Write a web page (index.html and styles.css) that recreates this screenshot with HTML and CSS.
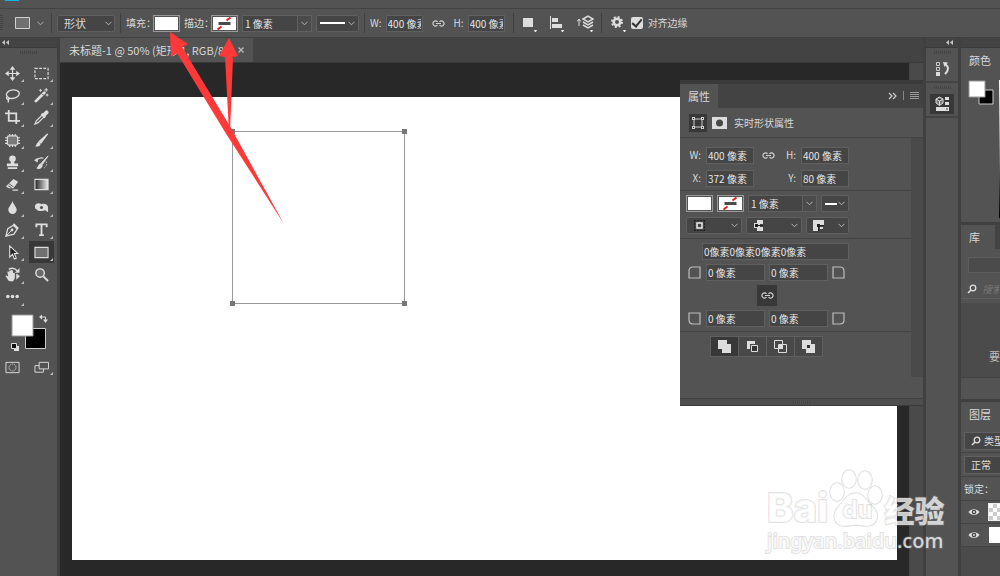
FILE: index.html
```html
<!DOCTYPE html>
<html lang="zh-CN">
<head>
  <meta charset="UTF-8">
  <title>未标题-1</title>
  <link rel="stylesheet" href="styles.css">
</head>
<body>
  <svg class="defs" aria-hidden="true">
    <symbol id="chevron" viewBox="0 0 7 5"><path d="M.5 .8 3.5 3.8 6.5 .8" fill="none" stroke="#b5b5b5"/></symbol>
    <symbol id="link" viewBox="0 0 13 7"><path d="M5.5 5.2A2.6 2.6 0 1 1 5.5 1.8M7.5 1.8A2.6 2.6 0 1 1 7.5 5.2M4 3.5h5" fill="none" stroke="#cfcfcf" stroke-width="1.2"/></symbol>
    <symbol id="nostroke" viewBox="0 0 22 13"><path d="M0 0h22v13H0z" fill="#fff"/><path d="M4 12.5 8 9.500M13 3.500 17 .5" stroke="#e02020" stroke-width="2"/><path d="M5 5h12v3H5z" fill="#4a4a4a"/></symbol>
    <symbol id="search" viewBox="0 0 10 10"><circle cx="6" cy="4" r="2.800" fill="none" stroke="#ddd" stroke-width="1.300"/><path d="M4 6 1 9" stroke="#ddd" stroke-width="1.600"/></symbol>
    <symbol id="eye" viewBox="0 0 12 8"><path d="M.5 4C3 .2 9 .2 11.500 4 9 7.800 3 7.800 .5 4z" fill="#e0e0e0"/><circle cx="6" cy="4" r="2.300" fill="#4a4a4a"/><circle cx="6" cy="4" r="1" fill="#e0e0e0"/></symbol>
    <symbol id="corner" viewBox="0 0 13 13"><path d="M5 1h7v11H1V5q0-4 4-4z" fill="none" stroke="#bdbdbd" stroke-width="1.200"/></symbol>
  </svg>

  <div class="menubar"><span class="logo"></span></div>

  <div class="options">
    <span class="grip-v"></span>
    <button class="preset" aria-label="矩形工具">
      <svg width="15" height="12"><path d="M.5 .5h14v11H.5z" fill="#707070" stroke="#d0d0d0"/></svg>
      <svg width="7" height="5"><use href="#chevron"/></svg>
    </button>
    <span class="sep"></span>
    <span class="select mode">
      <select aria-label="模式"><option>形状</option></select>
      <svg width="7" height="5"><use href="#chevron"/></svg>
    </span>
    <span class="sep"></span>
    <label class="swatch-label" for="fill">填充：</label>
    <button id="fill" class="swatch"></button>
    <label class="swatch-label" for="stroke">描边：</label>
    <button id="stroke" class="swatch"><svg width="23" height="13"><use href="#nostroke"/></svg></button>
    <span class="combo">
      <input type="text" value="1 像素" aria-label="描边宽度">
      <button aria-label="选择宽度"><svg width="7" height="5"><use href="#chevron"/></svg></button>
    </span>
    <button class="drop line" aria-label="线型">
      <svg width="25" height="2"><path d="M0 0h25v2H0z" fill="#fff"/></svg>
      <svg width="7" height="5"><use href="#chevron"/></svg>
    </button>
    <span class="sep"></span>
    <label for="w">W:</label>
    <input id="w" class="size" type="text" value="400 像素">
    <button class="link" aria-label="链接"><svg width="13" height="7"><use href="#link"/></svg></button>
    <label for="h">H:</label>
    <input id="h" class="size" type="text" value="400 像素">
    <div class="actions">
      <span class="sep"></span>
      <button class="action" aria-label="路径操作"><svg width="17" height="18"><path d="M0 4h10v9H0z" fill="#ddd"/><path d="M11 16h3l-1 2h-1z" fill="#eee"/></svg></button>
      <button class="action" aria-label="对齐"><svg width="17" height="18"><path d="M.5 2v13" stroke="#ddd"/><path d="M2 4h6v4H2zM2 10h10v4H2z" fill="#ddd"/><path d="M11 16h3l-1 2h-1z" fill="#eee"/></svg></button>
      <button class="action" aria-label="排列"><svg width="18" height="18"><path d="M2 12V6M0 7.500 2 5l2 2.500" fill="none" stroke="#ddd"/><path d="M6 5l5-3 5 3-5 3zM6 8l5 3 5-3M6 11l5 3 5-3" fill="none" stroke="#ddd" stroke-width="1.500"/><path d="M13 16h3l-1 2h-1z" fill="#eee"/></svg></button>
      <span class="sep"></span>
      <button class="action" aria-label="设置"><svg width="17" height="18"><circle cx="6" cy="8" r="3.300" fill="none" stroke="#ddd" stroke-width="2.600"/><circle cx="6" cy="8" r="5" fill="none" stroke="#ddd" stroke-width="2" stroke-dasharray="2 1.930"/><path d="M12 16h3l-1 2h-1z" fill="#eee"/></svg></button>
      <span class="check"><input id="snap" type="checkbox" checked><label for="snap">对齐边缘</label></span>
    </div>
  </div>

  <div class="workspace">
    <div class="toolbox">
      <div class="dock-head"><svg width="7" height="5"><path d="M3 0v5L0 2.500zM7 0v5L4 2.500z" fill="#c8c8c8"/></svg></div>
      <span class="grip"></span>
      <div class="tools">
        <button aria-label="移动"><svg viewBox="0 0 16 16"><path d="M8 2v12M2 8h12" stroke="#ddd" stroke-width="1.300"/><path d="M8 0l3 4H5zM8 16l3-4H5zM0 8l4-3v6zM16 8l-4-3v6z" fill="#ddd"/></svg></button>
        <button aria-label="选框"><svg viewBox="0 0 16 16"><path d="M1 2.500h14v11H1z" fill="none" stroke="#ddd" stroke-width="1.200" stroke-dasharray="3 1.500"/></svg></button>
        <button aria-label="套索"><svg viewBox="0 0 16 16"><path d="M3.500 10C-1 7 3 2 9 2s8 4 4.500 7S5 11.500 3.500 10s-2.500 .5-1 2 2.500 0 1-1.500m0 2v3" fill="none" stroke="#ddd" stroke-width="1.400"/></svg></button>
        <button aria-label="魔棒"><svg viewBox="0 0 16 16"><path d="M2 14 11 5" stroke="#ddd" stroke-width="3" stroke-linecap="round"/><path d="M8.500 6l2 2" stroke="#535353"/><path d="M7 1v3M5.500 2.500h3M13 0v4M11 2h4M14 6v3M12.500 7.500h3" stroke="#ddd"/></svg></button>
        <button aria-label="裁剪"><svg viewBox="0 0 16 16"><path d="M0 3.500h12V12M4 0v11.500h12M12 11.500V15" fill="none" stroke="#ddd" stroke-width="1.900"/></svg></button>
        <button aria-label="吸管"><svg viewBox="0 0 16 16"><path d="M9.500 4.500 2.500 11.500 1 15l3.500-1.500 7-7z" fill="none" stroke="#ddd" stroke-width="1.300"/><path d="M8 4l4 4" stroke="#ddd" stroke-width="2"/><path d="M10.500 5.500 13.500 2.500" stroke="#ddd" stroke-width="4" stroke-linecap="round"/></svg></button>
        <button aria-label="修补"><svg viewBox="0 0 16 16"><path d="M5 1v14M8 1v14M11 1v14M0 5h16M0 8h16M0 11h16" stroke="#ddd" stroke-width="1.200"/><rect x="2.500" y="3" width="11" height="10" rx="2" fill="#7a7a7a" stroke="#ddd" stroke-width="1.300"/></svg></button>
        <button aria-label="画笔"><svg viewBox="0 0 16 16"><path d="M14.500 1 7.500 10.500 5.500 9z" fill="#ddd" stroke="#ddd" stroke-width="1.300"/><path d="M5 9.500c2 .5 2.500 2 1.500 3.500C5 15 2 14.500 1 14c2-.5 1.500-4 4-4.500z" fill="#ddd"/></svg></button>
        <button aria-label="图章"><svg viewBox="0 0 16 16"><circle cx="8" cy="4" r="3.500" fill="#ddd"/><path d="M6.500 5h3l.5 4h4v3H2V9h4zM3 13h10v2H3z" fill="#ddd"/></svg></button>
        <button aria-label="历史画笔"><svg viewBox="0 0 16 16"><path d="M15 1 9 10 7.500 9zM7 9.500c2 .5 2 2 1 3.500-1.500 2-4 1.500-5 1 2-.5 1.500-4 4-4.500z" fill="#ddd" stroke="#ddd"/><path d="M4 3 0 5.500 4 8z" fill="#ddd"/><path d="M3 5.500Q6 2 10 3.500" fill="none" stroke="#ddd" stroke-width="1.200"/><path d="M13 7q2 4-3 7.500" fill="none" stroke="#ddd" stroke-dasharray="1.500 1.500"/></svg></button>
        <button aria-label="橡皮"><svg viewBox="0 0 16 16"><path d="M9 2l5 3-5 7H4l-3-2z" fill="#ddd"/><path d="M4 7l5 3.500M3.500 9.500 7 11.500" fill="none" stroke="#535353"/><path d="M8 14h6" stroke="#ddd" stroke-width="1.300"/></svg></button>
        <button aria-label="渐变"><svg viewBox="0 0 16 16"><defs><linearGradient id="g"><stop stop-color="#222"/><stop offset="1" stop-color="#eee"/></linearGradient></defs><path d="M1 2.500h14v11H1z" fill="url(#g)" stroke="#ddd" stroke-width="1.200"/></svg></button>
        <button aria-label="模糊"><svg viewBox="0 0 16 16"><path d="M8 1C7 5 3.500 7 3.500 10.500a4.500 4.500 0 0 0 9 0C12.500 7 9 5 8 1z" fill="#ddd"/></svg></button>
        <button aria-label="海绵"><svg viewBox="0 0 16 16"><path d="M1 7c0-4 5-4 7-2.500 3-1 7 0 7 3.500v5l-3-2c-3 1-8 1-9-1C1 10 1 8 1 7z" fill="#ddd"/><circle cx="8" cy="8" r="1.700" fill="#535353"/></svg></button>
        <button aria-label="钢笔"><svg viewBox="0 0 16 16"><path d="M1 15 3 7l6-3.500 4 4L9.500 13z" fill="none" stroke="#ddd" stroke-width="1.400"/><path d="M1 15 7 9" stroke="#ddd"/><circle cx="7.500" cy="8.500" r="1.500" fill="#ddd"/><path d="M9 2l5 5" stroke="#ddd" stroke-width="2"/></svg></button>
        <button aria-label="文字"><svg viewBox="0 0 16 16"><path d="M2.500 5.500V2.500h11v3M8 2.500v11M5.500 14h5" fill="none" stroke="#ddd" stroke-width="2"/></svg></button>
        <button aria-label="路径选择"><svg viewBox="0 0 16 16"><path d="M5 1v12l3-3 2 5 2-1-2-5h3.500z" fill="#222" stroke="#ddd" stroke-width="1.200"/></svg></button>
        <button class="active" aria-label="矩形"><svg viewBox="0 0 16 16"><path d="M1 2.500h14v11H1z" fill="#707070" stroke="#ddd" stroke-width="1.200"/></svg></button>
        <button aria-label="抓手"><svg viewBox="0 0 16 16"><path d="M4 15 .5 9.500q1-1.500 3 1L2.500 5q1.500-1 2 1V4q1.500-1.500 2 .5V3.500q1.500-1 2 1v2q2-1 2 1v4q-.5 3-2.500 4z" fill="#ddd"/><path d="M4 2.500q5-3 9 1.500" fill="none" stroke="#ddd" stroke-width="1.400"/><path d="M15.500 1v5h-5zM12 7l4 2.500-4 4z" fill="#ddd"/></svg></button>
        <button aria-label="缩放"><svg viewBox="0 0 16 16"><circle cx="6.500" cy="6.500" r="4.500" fill="#6a6a6a" stroke="#ddd" stroke-width="1.500"/><path d="M10 10l5 5" stroke="#ddd" stroke-width="2.200"/></svg></button>
        <button aria-label="更多"><svg viewBox="0 0 16 16"><circle cx="3" cy="8" r="1.900" fill="#ddd"/><circle cx="8" cy="8" r="1.900" fill="#ddd"/><circle cx="13" cy="8" r="1.900" fill="#ddd"/></svg></button>
      </div>
      <svg class="colors" width="40" height="40">
        <path d="M14.500 14.500h20v20h-20z" fill="#000" stroke="#ccc"/>
        <path d="M1 1h21v21H1z" fill="#fff" stroke="#999"/>
        <path d="M31 .5v5L28 3zM32 5.500h5L34.500 9z" fill="#ddd"/><path d="M30 3h4.500v3" fill="none" stroke="#ddd"/>
        <path d="M3 32h5v5H3z" fill="#ddd"/><path d="M.5 29.500h5v5h-5z" fill="#111" stroke="#ddd"/>
      </svg>
      <div class="modes">
        <button aria-label="快速蒙版"><svg viewBox="0 0 16 16"><path d="M1 2.500h14v11H1z" fill="none" stroke="#ddd"/><circle cx="8" cy="8" r="3.700" fill="none" stroke="#ddd" stroke-dasharray="1.300 1"/></svg></button>
        <button class="more" aria-label="屏幕模式"><svg viewBox="0 0 16 16"><path d="M1 6h9v7H1z" fill="none" stroke="#ddd"/><path d="M5.500 2.500h10v7h-10z" fill="#535353" stroke="#ddd"/></svg></button>
      </div>
    </div>

    <div class="main">
      <div class="tabs">
        <div class="tab">未标题-1 @ 50% (矩形 1, RGB/8)<button aria-label="关闭"><svg width="6" height="6"><path d="M.5 .5l5 5M5.500 .5l-5 5" stroke="#bbb" stroke-width="1.300"/></svg></button></div>
      </div>
      <div class="view">
        <div class="canvas">
          <div class="artboard">
            <svg class="shape" width="178" height="178">
              <path d="M3.500 3.500h172v172H3.500z" fill="none" stroke="#999"/>
              <path d="M1 1h5v5H1zM173 1h5v5h-5zM1 173h5v5H1zM173 173h5v5h-5z" fill="#777"/>
            </svg>
          </div>
        </div>
        <div class="scroll"></div>
      </div>

      <div class="properties">
        <div class="panel-tabs">
          <span class="panel-tab">属性</span>
          <svg width="32" height="10"><path d="M1 2l3 3-3 3M5 2l3 3-3 3" fill="none" stroke="#ccc" stroke-width="1.200"/><path d="M15.500 0v9" stroke="#888"/><path d="M22 1.500h9M22 3.500h9M22 5.500h9M22 7.500h9" stroke="#999"/></svg>
        </div>
        <div class="panel-title">
          <span class="badge"><svg width="12" height="12"><path d="M2 2h8v8H2z" fill="none" stroke="#ccc"/><path d="M0 0h3v3H0zM9 0h3v3H9zM0 9h3v3H0zM9 9h3v3H9z" fill="#ccc"/><path d="M1 1h1v1H1zM10 1h1v1h-1zM1 10h1v1H1zM10 10h1v1h-1z" fill="#383838"/></svg></span>
          <svg width="15" height="12"><path d="M0 0h15v12H0z" fill="#ddd"/><circle cx="7.500" cy="6" r="3.500" fill="#484848"/></svg>
          <span>实时形状属性</span>
        </div>
        <div class="panel-body">
          <div class="fields">
            <div class="geometry">
              <label for="pw">W:</label><input id="pw" type="text" value="400 像素">
              <button class="plain" aria-label="链接"><svg width="13" height="7"><use href="#link"/></svg></button>
              <label for="ph">H:</label><input id="ph" type="text" value="400 像素">
              <label for="px">X:</label><input id="px" type="text" value="372 像素">
              <span></span>
              <label for="py">Y:</label><input id="py" type="text" value="80 像素">
            </div>
            <div class="stroke-options">
              <div class="row">
                <button class="swatch" aria-label="填充"></button>
                <button class="swatch" aria-label="描边"><svg width="23" height="13"><use href="#nostroke"/></svg></button>
                <span class="combo">
                  <input type="text" value="1 像素" aria-label="描边宽度">
                  <button aria-label="选择宽度"><svg width="7" height="5"><use href="#chevron"/></svg></button>
                </span>
                <button class="drop grow" aria-label="线型"><svg width="12" height="2"><path d="M0 0h12v2H0z" fill="#fff"/></svg><svg width="7" height="5"><use href="#chevron"/></svg></button>
              </div>
              <div class="row">
                <button class="drop wide" aria-label="描边对齐"><svg width="11" height="11"><path d="M0 .5h11M0 10.500h11M.5 0v11M10.500 0v11" stroke="#222" stroke-dasharray="2 1"/><path d="M3 3h5v5H3z" fill="none" stroke="#eee" stroke-width="1.500"/></svg><svg width="7" height="5"><use href="#chevron"/></svg></button>
                <button class="drop wide" aria-label="端点"><svg width="9" height="11"><path d="M3 0h6v4H6v3h3v4H3V8H0V3h3z" fill="#ddd"/><path d="M1 4h3v3H1zM4 5h5v1H4z" fill="#222"/></svg><svg width="7" height="5"><use href="#chevron"/></svg></button>
                <button class="drop grow corner" aria-label="角点"><svg width="11" height="11"><path d="M0 0h11v6H6v5H0z" fill="#ddd"/><path d="M4 4h3v3H4zM7 5h4v1H7zM5 7h1v4H5z" fill="#222"/><path d="M7 7h3v2H7z" fill="#ddd"/></svg><svg width="7" height="5"><use href="#chevron"/></svg></button>
              </div>
            </div>
            <div class="radii">
              <input class="all" type="text" value="0像素0像素0像素0像素" aria-label="圆角半径">
              <div class="row">
                <svg width="13" height="13"><use href="#corner"/></svg>
                <input type="text" value="0 像素" aria-label="左上角"><input type="text" value="0 像素" aria-label="右上角">
                <svg class="flip-x" width="13" height="13"><use href="#corner"/></svg>
              </div>
              <button class="link-radii" aria-label="链接圆角"><svg width="13" height="7"><use href="#link"/></svg></button>
              <div class="row">
                <svg class="flip-y" width="13" height="13"><use href="#corner"/></svg>
                <input type="text" value="0 像素" aria-label="左下角"><input type="text" value="0 像素" aria-label="右下角">
                <svg class="flip-x flip-y" width="13" height="13"><use href="#corner"/></svg>
              </div>
            </div>
            <div class="pathops">
              <button class="active" aria-label="合并"><svg width="13" height="13"><path d="M0 0h9v4h4v9H4V9H0z" fill="#ddd"/></svg></button>
              <button aria-label="减去"><svg width="13" height="13"><path d="M1 1h8v3H4v5H1z" fill="#ddd"/><path d="M5.500 5.500h6v6h-6z" fill="#333" stroke="#ddd"/></svg></button>
              <button aria-label="相交"><svg width="13" height="13"><path d="M.5 .5h8v8h-8zM4.500 4.500h8v8h-8z" fill="none" stroke="#ddd"/><path d="M5 5h4v4H5z" fill="#ddd"/></svg></button>
              <button aria-label="排除"><svg width="13" height="13"><path d="M0 0h9v4h4v9H4V9H0z" fill="#ddd"/><path d="M5 5h3v3H5z" fill="#333"/></svg></button>
            </div>
          </div>
          <div class="panel-scroll"></div>
        </div>
        <div class="panel-foot"><span class="grip"></span></div>
      </div>
    </div>

    <div class="dock">
      <div class="dock-head"><svg width="7" height="5"><path d="M3 0v5L0 2.500zM7 0v5L4 2.500z" fill="#c8c8c8"/></svg></div>
      <div class="dock-group">
        <span class="grip"></span>
        <button aria-label="历史记录"><svg width="15" height="16"><path d="M1.500 1.500h3v3h-3zM1.500 6.500h3v3h-3z" fill="none" stroke="#ccc"/><path d="M1 11h4v4H1z" fill="#ddd"/><path d="M8 1l5 .5L9.500 6z" fill="#ddd"/><path d="M10 3q6 4 0 10" fill="none" stroke="#ddd" stroke-width="2"/></svg></button>
      </div>
      <div class="dock-group">
        <span class="grip"></span>
        <button class="active" aria-label="属性"><svg width="15" height="16"><path d="M4.500 1 8 3v4L4.500 9.500 1 7V3zM1 3l3.500 2L8 3M4.500 5v4" fill="#777" stroke="#ddd"/><path d="M10 1h4v3h-4zM10 6h4v3h-4zM1 11h13v4H1z" fill="#ddd"/><path d="M11 13h2" stroke="#444"/></svg></button>
      </div>
    </div>

    <div class="panels">
      <div class="dock-head"></div>
      <div class="panel color">
        <div class="panel-tab">颜色</div>
        <div class="color-body">
          <svg width="27" height="26"><path d="M11 10h14v14H11z" fill="#000" stroke="#ccc"/><path d="M1 1h16v16H1z" fill="#fff" stroke="#999"/></svg>
          <span class="ramp"></span>
        </div>
      </div>
      <div class="panel library">
        <div class="lib-tabs"><span class="panel-tab">库</span></div>
        <div class="lib-select"></div>
        <div class="lib-search"><svg width="10" height="10"><use href="#search"/></svg><input type="text" placeholder="搜索" aria-label="搜索"></div>
        <div class="lib-body">要</div>
      </div>
      <div class="panel layers">
        <div class="panel-tab">图层</div>
        <div class="layer-row"><span class="box"><svg width="10" height="10"><use href="#search"/></svg>类型</span></div>
        <div class="layer-row"><span class="box">正常</span></div>
        <div class="layer-row">锁定：</div>
        <div class="layer"><svg width="12" height="8"><use href="#eye"/></svg><span class="thumb checker"></span></div>
        <div class="layer"><svg width="12" height="8"><use href="#eye"/></svg><span class="thumb"></span></div>
      </div>
    </div>
  </div>

  <svg class="arrows" width="300" height="240">
    <path d="M170 32l18 12-6 3L231 128l53 96-59-92-48-79-6 4z" fill="#ff3838"/>
    <path d="M229 38l9 18-5 1-3 76-1-1-4-75-6-1z" fill="#ff3838"/>
  </svg>

  <div class="watermark">
    <div class="brand">
      <span class="bai">Bai</span>
      <span class="paw">
        <svg width="54" height="58"><g fill="#fff" fill-opacity=".75" stroke="#999" stroke-opacity=".35" stroke-width="1.500"><ellipse cx="8" cy="23" rx="7" ry="9"/><ellipse cx="20" cy="10" rx="7" ry="9"/><ellipse cx="36" cy="11" rx="7" ry="9"/><ellipse cx="46" cy="26" rx="7" ry="9"/><path d="M27 24c8 0 11 9 17 14 8 8 4 19-6 19-5 0-7-1-11-1s-7 1-12 1c-10 0-13-11-6-19 5-5 9-14 18-14z"/></g></svg>
        <span class="du">du</span>
      </span>
      <span class="cn">经验</span>
    </div>
    <div class="site">jingyan.baidu.com</div>
  </div>
</body>
</html>
```

FILE: styles.css
```css
* {
  box-sizing: border-box;
}
body {
  margin: 0;
  height: 100vh;
  display: flex;
  flex-direction: column;
  overflow: hidden;
  position: relative;
  background: #535353;
  color: #d8d8d8;
  font: 10px/16px "Noto Sans CJK SC", sans-serif;
  white-space: nowrap;
}
svg {
  display: block;
  flex: none;
}
.defs {
  position: absolute;
  width: 0;
  height: 0;
}
button, input, select {
  font: inherit;
  color: inherit;
  margin: 0;
  padding: 0;
  border: 0;
  border-radius: 0;
  background: none;
}
button {
  display: flex;
  align-items: center;
  justify-content: center;
  flex: none;
}
input[type=text] {
  min-width: 0;
  height: 17px;
  padding: 0 1px;
  background: #454545;
  border: 1px solid #606060;
  color: #e4e4e4;
}

/* top bars */
.menubar {
  height: 9px;
  padding-left: 5px;
  border-bottom: 1px solid #444;
  flex: none;
}
.logo {
  display: block;
  width: 14px;
  height: 1px;
  background: #12b5e0;
}
.options {
  height: 29px;
  display: flex;
  align-items: center;
  gap: 4px;
  border-bottom: 1px solid #404040;
  flex: none;
}
.grip-v {
  width: 3px;
  height: 16px;
  background: repeating-linear-gradient(#444 0 1px, #535353 1px 2px);
}
.preset {
  gap: 7px;
  padding: 0 2px 0 8px;
}
.sep {
  width: 1px;
  height: 20px;
  margin: 0 1px;
  background: #404040;
}
.select {
  display: flex;
  align-items: center;
  height: 17px;
  padding-right: 2px;
  background: #454545;
  border: 1px solid #606060;
  border-radius: 2px;
}
.mode {
  width: 58px;
}
.select select {
  appearance: none;
  flex: 1;
  min-width: 0;
  padding-left: 6px;
  font-size: 11px;
}
.swatch-label {
  margin-right: -7px;
}
.swatch {
  width: 27px;
  height: 17px;
  background: #fff;
  border: 1px solid #999;
  box-shadow: inset 0 0 0 1px #535353;
}
.combo {
  display: flex;
  width: 70px;
}
.combo input {
  flex: 1;
  padding-left: 2px;
}
.combo button {
  width: 14px;
  border: 1px solid #606060;
  border-left: 0;
  background: #4b4b4b;
}
.drop {
  height: 17px;
  justify-content: space-between;
  padding: 0 3px;
  background: #454545;
  border: 1px solid #606060;
  border-radius: 2px;
}
.line {
  width: 43px;
}
.size {
  width: 37px;
}
.link {
  padding: 0 5px;
}
.actions {
  display: flex;
  align-items: center;
  gap: 4px;
  padding-left: 3px;
}
.action {
  width: 23px;
  justify-content: flex-start;
  padding-left: 4px;
}
.check {
  display: flex;
  align-items: center;
  gap: 5px;
  margin-left: -3px;
}
input[type=checkbox] {
  appearance: none;
  width: 12px;
  height: 12px;
  border-radius: 2px;
  background: #ddd;
  display: flex;
  justify-content: center;
}
input[type=checkbox]:checked::after {
  content: "";
  width: 4px;
  height: 8px;
  border: solid #333;
  border-width: 0 2px 2px 0;
  transform: rotate(40deg);
}

.workspace {
  flex: 1;
  min-height: 0;
  display: flex;
}
.dock-head {
  height: 10px;
  display: flex;
  align-items: center;
  background: #434343;
  border-bottom: 1px solid #3a3a3a;
  flex: none;
}
.grip {
  display: block;
  width: 17px;
  height: 3px;
  background: repeating-linear-gradient(90deg, #444 0 1px, #535353 1px 2px);
}

/* toolbox */
.toolbox {
  width: 60px;
  border-right: 3px solid #404040;
  display: flex;
  flex-direction: column;
  flex: none;
}
.toolbox .dock-head {
  padding-left: 2px;
}
.toolbox .grip {
  margin: 3px auto 8px;
}
.tools {
  display: grid;
  grid-template-columns: 29px 25px;
  grid-template-rows: repeat(11, 1fr);
  height: 246px;
}
.tools svg, .modes svg {
  width: 15px;
  height: 15px;
}
.tools button, .modes button {
  position: relative;
  width: 25px;
}
.tools button:not([aria-label="缩放"])::after, .modes .more::after {
  content: "";
  position: absolute;
  right: 1px;
  bottom: 2px;
  border-left: 3px solid transparent;
  border-bottom: 3px solid #bbb;
}
.tools .active {
  background: #383838;
}
.colors {
  margin: 6px 0 0 11px;
}
.modes {
  display: flex;
  gap: 4px;
  padding-top: 3px;
}
.modes button {
  height: 20px;
}

/* document */
.main {
  flex: 1;
  min-width: 0;
  position: relative;
  display: flex;
  flex-direction: column;
  border-right: 3px solid #404040;
}
.tabs {
  height: 25px;
  display: flex;
  background: #434343;
  border-bottom: 1px solid #383838;
}
.tab {
  display: flex;
  align-items: center;
  gap: 10px;
  padding: 0 9px;
  background: #535353;
  font-size: 11px;
}
.view {
  flex: 1;
  display: flex;
  min-height: 0;
}
.canvas {
  flex: 1;
  display: flex;
  padding: 34px 12px 16px;
  background: #282828;
}
.artboard {
  flex: 1;
  position: relative;
  background: #fff;
}
.shape {
  position: absolute;
  left: 157px;
  top: 31px;
}
.scroll {
  width: 14px;
  background: #4a4a4a;
  border-left: 1px solid #444;
}

/* properties panel */
.properties {
  position: absolute;
  top: 42px;
  right: 0;
  width: 243px;
  background: #535353;
  border-top: 4px solid #3a3a3a;
  border-bottom: 1px solid #3a3a3a;
}
.panel-tab {
  padding: 0 8px;
  line-height: 24px;
  font-size: 11px;
  background: #535353;
}
.panel-tabs {
  display: flex;
  align-items: center;
  justify-content: space-between;
  padding-right: 3px;
  background: #434343;
}
.panel-title {
  display: flex;
  align-items: center;
  height: 30px;
  gap: 5px;
  padding-left: 9px;
  border-bottom: 1px solid #434343;
}
.panel-title span:last-child {
  padding-left: 2px;
}
.badge {
  display: flex;
  padding: 3px;
  background: #383838;
}
.panel-body {
  display: flex;
}
.fields {
  flex: 1;
}
.panel-scroll {
  width: 12px;
  background: #4a4a4a;
}
.geometry {
  display: grid;
  grid-template-columns: 21px 48px 19px 13px 48px;
  gap: 6px 5px;
  padding: 9px 0 3px;
  border-bottom: 1px solid #434343;
}
.geometry label {
  text-align: right;
}
.stroke-options, .radii {
  display: flex;
  flex-direction: column;
  gap: 5px;
  padding: 4px 62px 4px 6px;
  border-bottom: 1px solid #434343;
}
.row {
  display: flex;
  align-items: center;
  gap: 4px;
}
.stroke-options .combo {
  width: 69px;
}
.grow {
  flex: 1;
}
.wide {
  width: 56px;
  padding-left: 7px;
}
.corner {
  padding-left: 6px;
}
.radii {
  gap: 4px;
  padding-left: 8px;
}
.radii .all {
  margin-left: 14px;
}
.radii .row input {
  width: 59px;
}
.radii .row input:first-of-type {
  margin-left: 1px;
}
.flip-x {
  transform: scaleX(-1);
}
.flip-y {
  transform: scaleY(-1);
}
.flip-x.flip-y {
  transform: scale(-1);
}
.link-radii {
  width: 20px;
  height: 21px;
  margin-left: 69px;
  background: #383838;
}
.pathops {
  display: flex;
  padding: 4px 0 20px 30px;
}
.pathops button {
  width: 29px;
  height: 21px;
  margin-right: -1px;
  background: #484848;
  border: 1px solid #606060;
}
.pathops .active {
  background: #383838;
}
.panel-foot {
  height: 28px;
  display: flex;
  align-items: flex-end;
  justify-content: center;
  padding-bottom: 1px;
  background: linear-gradient(#535353 21px, #3f3f3f 21px 22px, #4d4d4d 22px);
}

/* right side */
.dock {
  width: 32px;
  flex: none;
}
.dock .dock-head {
  justify-content: flex-end;
  padding-right: 5px;
}
.dock-group {
  display: flex;
  flex-direction: column;
  align-items: center;
  gap: 5px;
  padding: 3px 0 2px;
  border-bottom: 2px solid #434343;
}
.dock-group button {
  width: 24px;
  height: 20px;
}
.dock-group .active {
  background: #383838;
}
.panels {
  width: 42px;
  flex: none;
  overflow: hidden;
  display: flex;
  flex-direction: column;
  border-left: 3px solid #404040;
}
.panel {
  display: flex;
  flex-direction: column;
  border-bottom: 3px solid #404040;
}
.color {
  height: 177px;
}
.color-body {
  flex: 1;
  display: flex;
  justify-content: space-between;
  padding: 8px 0 4px 7px;
}
.ramp {
  width: 1px;
  background: linear-gradient(#fff, #000);
}
.library {
  height: 177px;
}
.lib-tabs {
  display: flex;
  background: #434343;
}
.lib-tabs .panel-tab {
  width: 34px;
}
.lib-select {
  height: 16px;
  margin: 8px 0 6px 7px;
  background: #4b4b4b;
  border: 1px solid #5e5e5e;
  border-right: 0;
}
.lib-search {
  display: flex;
  align-items: center;
  gap: 4px;
  height: 20px;
  margin-bottom: 4px;
  padding-left: 6px;
  border-bottom: 1px solid #5e5e5e;
}
.lib-search input {
  width: 40px;
  border: 0;
  background: none;
  font-style: italic;
}
.lib-search input::placeholder {
  color: #777;
}
.lib-body {
  height: 75px;
  padding: 45px 0 0 28px;
  background: #4b4b4b;
  border-bottom: 1px solid #434343;
  font-size: 11px;
  color: #bbb;
}
.layers {
  flex: 1;
  border: 0;
  background: #4b4b4b;
}
.layers .panel-tab {
  padding-bottom: 3px;
}
.layer-row {
  height: 24px;
  display: flex;
  align-items: center;
  padding-left: 3px;
  background: #535353;
  border-bottom: 1px solid #434343;
  color: #ddd;
}
.box {
  display: flex;
  align-items: center;
  flex: none;
  gap: 3px;
  width: 60px;
  height: 18px;
  padding-left: 6px;
  background: #454545;
  border: 1px solid #606060;
}
.layer {
  display: flex;
  align-items: center;
  height: 23px;
  padding-left: 7px;
  gap: 9px;
  background: #535353;
  border-bottom: 1px solid #434343;
}
.thumb {
  width: 30px;
  height: 16px;
  flex: none;
  background: #fff;
}
.checker {
  background: repeating-conic-gradient(#ccc 0 25%, #fff 0 50%) 0 0 / 8px 8px;
  outline: 1px solid #eee;
}

/* overlays */
.arrows {
  position: absolute;
  left: 0;
  top: 0;
  pointer-events: none;
}
.watermark {
  position: absolute;
  right: 54px;
  bottom: 21px;
  width: 179px;
  color: rgba(255, 255, 255, 0.75);
  -webkit-text-stroke: 2px rgba(140, 140, 140, 0.25);
  paint-order: stroke fill;
  pointer-events: none;
}
.brand {
  display: flex;
  align-items: flex-end;
  gap: 1px;
}
.bai {
  font: 800 40px/38px Inter, sans-serif;
}
.paw {
  position: relative;
}
.du {
  position: absolute;
  left: 13px;
  bottom: 0;
  font: bold 24px/34px Inter, sans-serif;
}
.cn {
  font: 900 30px/36px "Noto Sans CJK SC", sans-serif;
}
.site {
  font: 500 20px/28px "Noto Sans", sans-serif;
}
```
